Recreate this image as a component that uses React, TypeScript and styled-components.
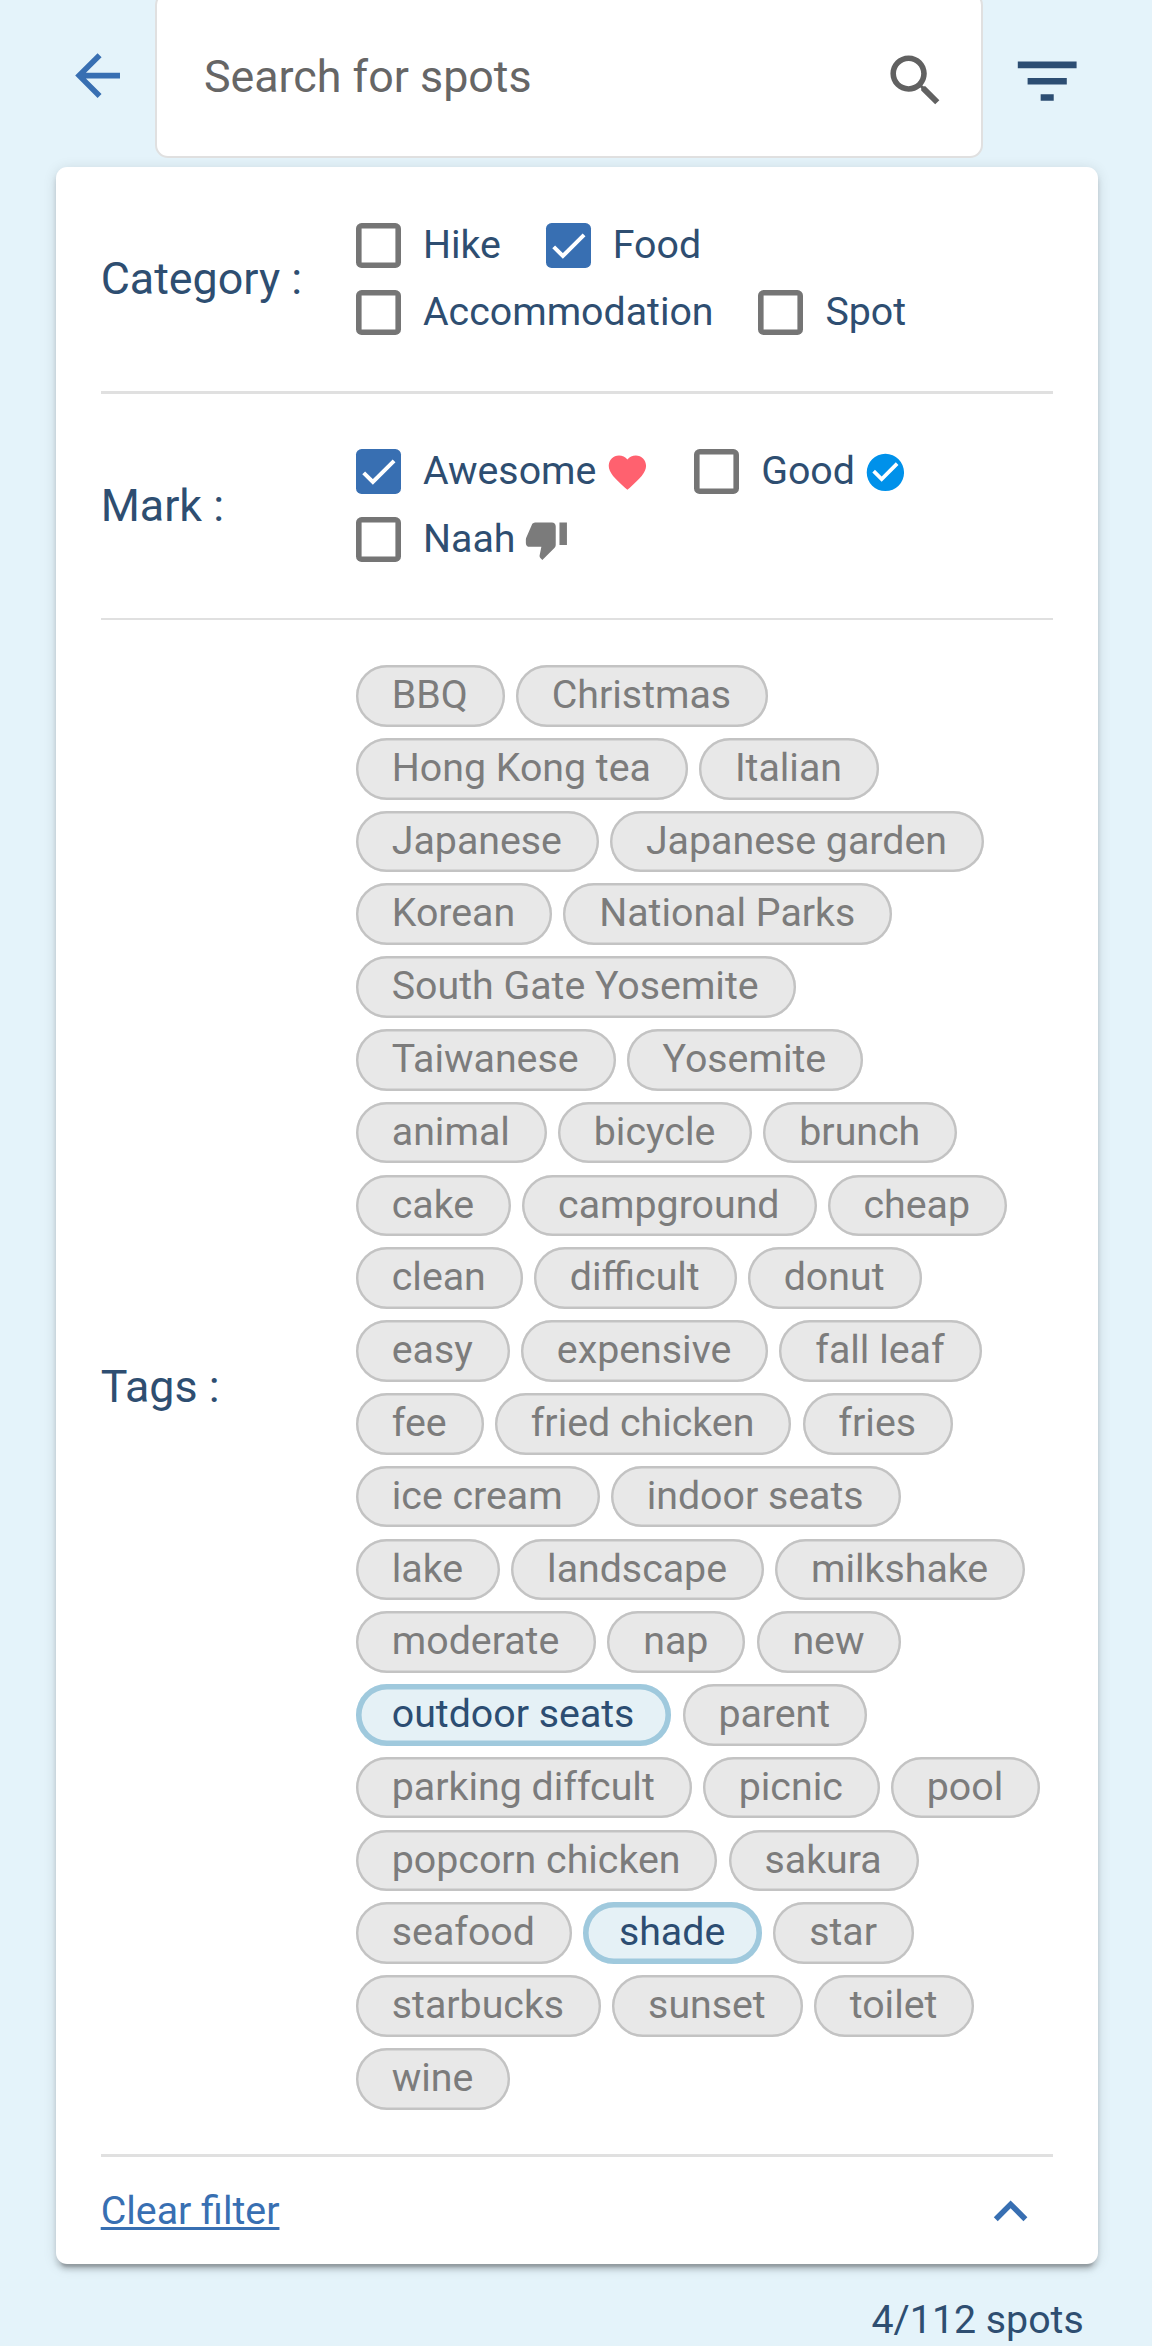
import React, { useState } from "react";
import styled, { createGlobalStyle, css } from "styled-components";

const GlobalStyle = createGlobalStyle`
  *, *::before, *::after { box-sizing: border-box; }
  html, body { margin: 0; padding: 0; background: #e4f3fa; }
  body {
    font-family: Roboto, "Liberation Sans", sans-serif;
    color: #2e4e71;
    overflow: hidden;
  }
  button { font: inherit; border: 0; background: none; padding: 0; margin: 0; cursor: pointer; }
`;

const Page = styled.div`
  display: flex;
  flex-direction: column;
  width: 1152px;
  height: 2346px;
  overflow: hidden;
  background: #e4f3fa;
`;

const TopBar = styled.header`
  flex: none;
  display: flex;
  align-items: flex-start;
  height: 166.8px;
  padding-left: 64.4px;
`;

const IconButton = styled.button<{ $size: number; $top: number; $color: string }>`
  flex: none;
  display: flex;
  width: ${(p) => p.$size}px;
  height: ${(p) => p.$size}px;
  margin-top: ${(p) => p.$top}px;
  color: ${(p) => p.$color};
`;

const Glyph = styled.svg`
  display: block;
  width: 100%;
  height: 100%;
  fill: currentColor;
`;

const SearchField = styled.div`
  flex: none;
  display: flex;
  align-items: center;
  width: 828px;
  height: 165.8px;
  margin: -7.8px 25.2px 0 23.3px;
  padding: 0 32px 0 47px;
  background: #fff;
  border: 2.8px solid #e0e0e0;
  border-radius: 13px;
`;

const SearchInput = styled.input`
  flex: 1;
  min-width: 0;
  height: 60px;
  padding: 0;
  margin-top: 3px;
  border: 0;
  outline: 0;
  background: transparent;
  font: 400 44.8px Roboto, sans-serif;
  color: #333;
  &::placeholder { color: #666; opacity: 1; }
`;

const Card = styled.main`
  flex: none;
  display: flex;
  flex-direction: column;
  width: 1042px;
  height: 2097.2px;
  margin-left: 55.9px;
  padding: 0 44.8px;
  background: #fff;
  border-radius: 11.2px;
  box-shadow:
    0 8.4px 2.8px -5.6px rgba(0, 0, 0, 0.2),
    0 5.6px 5.6px 0 rgba(0, 0, 0, 0.14),
    0 2.8px 14px 0 rgba(0, 0, 0, 0.12);
`;

const FilterRow = styled.section`
  flex: none;
  display: grid;
  grid-template-columns: 255.3px 1fr;
  align-items: center;
  padding: 44.8px 0;
`;

const Divider = styled.hr`
  flex: none;
  width: 100%;
  height: 2.8px;
  margin: 0;
  border: 0;
  background: #e0e0e0;
`;

const RowTitle = styled.h2`
  margin: 0;
  font-size: 44.8px;
  font-weight: 400;
  line-height: 60px;
`;

const CheckList = styled.div`
  display: flex;
  flex-wrap: wrap;
  column-gap: 44.8px;
`;

const CheckItem = styled.label`
  display: flex;
  align-items: center;
  height: 67.2px;
  font-size: 39.3px;
  line-height: 66px;
  white-space: nowrap;
  cursor: pointer;
`;

const Box = styled.span<{ $checked: boolean }>`
  flex: none;
  width: 45px;
  height: 45px;
  margin-right: 22px;
  border-radius: 5.6px;
  color: #fff;
  ${(p) =>
    p.$checked
      ? css`background: #386fb2;`
      : css`
          border: 0 solid transparent;
          box-shadow: inset 0 0 0 5.6px #757575;
        `}
`;

const CheckText = styled.span`
  display: block;
  height: 67.2px;
`;

const MarkIcon = styled.span<{ $color: string }>`
  flex: none;
  display: block;
  width: 44.8px;
  height: 44.8px;
  margin-left: 8.2px;
  color: ${(p) => p.$color};
`;

const TagList = styled.div`
  display: flex;
  flex-wrap: wrap;
  gap: 11.2px;
  max-width: 690px;
`;

const Chip = styled.button<{ $selected: boolean }>`
  height: 61.6px;
  padding: 0 37px 0 35.8px;
  border-radius: 30.8px;
  font-size: 39.3px;
  line-height: 61.6px;
  white-space: nowrap;
  ${(p) =>
    p.$selected
      ? css`
          color: #2c4d72;
          background: #e5f1f6;
          box-shadow: inset 0 0 0 5.6px #9fc9dd;
        `
      : css`
          color: #7c7c7c;
          background: #e8e8e8;
          box-shadow: inset 0 0 0 2.4px #c3c3c3;
        `}
`;

const CardFooter = styled.footer`
  flex: 1;
  display: flex;
  align-items: center;
  justify-content: space-between;
  padding-right: 9px;
`;

const ClearLink = styled.a`
  font-size: 39.3px;
  line-height: 60px;
  color: #386fb2;
  text-decoration: underline;
  text-decoration-thickness: 3px;
  text-decoration-skip-ink: none;
  text-underline-offset: 3px;
`;

const ResultCount = styled.p`
  margin: 26px 68.3px 0 0;
  text-align: right;
  font-size: 39.3px;
  line-height: 60px;
`;

const paths = {
  back: "M20 11H7.83l5.59-5.59L12 4l-8 8 8 8 1.41-1.41L7.83 13H20v-2z",
  search:
    "M15.5 14h-.79l-.28-.27C15.41 12.59 16 11.11 16 9.5 16 5.91 13.09 3 9.5 3S3 5.91 3 9.5 5.91 16 9.5 16c1.61 0 3.09-.59 4.23-1.57l.27.28v.79l5 4.99L20.49 19l-4.99-5zm-6 0C7.01 14 5 11.99 5 9.5S7.01 5 9.5 5 14 7.01 14 9.5 11.99 14 9.5 14z",
  filter: "M10 18h4v-2h-4v2zM3 6v2h18V6H3zm3 7h12v-2H6v2z",
  collapse: "M12 8l-6 6 1.41 1.41L12 10.83l4.59 4.58L18 14z",
  heart:
    "M12 21.35l-1.45-1.32C5.4 15.36 2 12.28 2 8.5 2 5.42 4.42 3 7.5 3c1.74 0 3.41.81 4.5 2.09C13.09 3.81 14.76 3 16.5 3 19.58 3 22 5.42 22 8.5c0 3.78-3.4 6.86-8.55 11.54L12 21.35z",
  good:
    "M12 2C6.48 2 2 6.48 2 12s4.48 10 10 10 10-4.48 10-10S17.52 2 12 2zm-2 15l-5-5 1.41-1.41L10 14.17l7.59-7.59L19 8l-9 9z",
  thumbDown:
    "M15 3H6c-.83 0-1.54.5-1.84 1.22l-3.02 7.05c-.09.23-.14.47-.14.73v2c0 1.1.9 2 2 2h6.31l-.95 4.57-.03.32c0 .41.17.79.44 1.06L9.83 23l6.59-6.59c.36-.36.58-.86.58-1.41V5c0-1.1-.9-2-2-2zm4 0v12h4V3h-4z",
};

type IconName = keyof typeof paths;

const Icon = ({ name }: { name: IconName }) => (
  <Glyph viewBox="0 0 24 24" aria-hidden="true">
    <path d={paths[name]} />
  </Glyph>
);

interface Option {
  label: string;
  icon?: IconName;
  color?: string;
}

const categories: Option[] = [
  { label: "Hike" },
  { label: "Food" },
  { label: "Accommodation" },
  { label: "Spot" },
];

const marks: Option[] = [
  { label: "Awesome", icon: "heart", color: "#ff616f" },
  { label: "Good", icon: "good", color: "#0091ea" },
  { label: "Naah", icon: "thumbDown", color: "#7b7b7b" },
];

const tags = [
  "BBQ", "Christmas", "Hong Kong tea", "Italian", "Japanese", "Japanese garden",
  "Korean", "National Parks", "South Gate Yosemite", "Taiwanese", "Yosemite",
  "animal", "bicycle", "brunch", "cake", "campground", "cheap", "clean",
  "difficult", "donut", "easy", "expensive", "fall leaf", "fee",
  "fried chicken", "fries", "ice cream", "indoor seats", "lake", "landscape",
  "milkshake", "moderate", "nap", "new", "outdoor seats", "parent",
  "parking diffcult", "picnic", "pool", "popcorn chicken", "sakura", "seafood",
  "shade", "star", "starbucks", "sunset", "toilet", "wine",
];

const toggle = (list: string[], value: string) =>
  list.includes(value) ? list.filter((v) => v !== value) : [...list, value];

interface CheckGroupProps {
  title: string;
  options: Option[];
  selected: string[];
  onToggle: (label: string) => void;
}

const CheckGroup = ({ title, options, selected, onToggle }: CheckGroupProps) => (
  <FilterRow>
    <RowTitle>{title} :</RowTitle>
    <CheckList>
      {options.map(({ label, icon, color }) => {
        const checked = selected.includes(label);
        return (
          <CheckItem key={label} onClick={() => onToggle(label)}>
            <Box $checked={checked} role="checkbox" aria-checked={checked}>
              {checked && (
                <Glyph viewBox="0 0 24 24">
                  <path d="M4.1 12.7 9 17.6 20.3 6.3" fill="none" stroke="currentColor" strokeWidth="2.13" />
                </Glyph>
              )}
            </Box>
            <CheckText>{label}</CheckText>
            {icon && (
              <MarkIcon $color={color ?? "#757575"}>
                <Icon name={icon} />
              </MarkIcon>
            )}
          </CheckItem>
        );
      })}
    </CheckList>
  </FilterRow>
);

export default function App() {
  const [category, setCategory] = useState(["Food"]);
  const [mark, setMark] = useState(["Awesome"]);
  const [picked, setPicked] = useState(["outdoor seats", "shade"]);

  const clear = () => {
    setCategory([]);
    setMark([]);
    setPicked([]);
  };

  return (
    <>
      <GlobalStyle />
      <Page>
        <TopBar>
          <IconButton $size={67.2} $top={41.5} $color="#386fb2" aria-label="Back">
            <Icon name="back" />
          </IconButton>
          <SearchField>
            <SearchInput placeholder="Search for spots" />
            <IconButton $size={67.2} $top={10.5} $color="#616161" aria-label="Search">
              <Icon name="search" />
            </IconButton>
          </SearchField>
          <IconButton $size={78.4} $top={41.6} $color="#2c4d72" aria-label="Filter">
            <Icon name="filter" />
          </IconButton>
        </TopBar>

        <Card>
          <CheckGroup
            title="Category"
            options={categories}
            selected={category}
            onToggle={(v) => setCategory(toggle(category, v))}
          />
          <Divider />
          <CheckGroup
            title="Mark"
            options={marks}
            selected={mark}
            onToggle={(v) => setMark(toggle(mark, v))}
          />
          <Divider />
          <FilterRow>
            <RowTitle>Tags :</RowTitle>
            <TagList>
              {tags.map((tag) => (
                <Chip
                  key={tag}
                  $selected={picked.includes(tag)}
                  onClick={() => setPicked(toggle(picked, tag))}
                >
                  {tag}
                </Chip>
              ))}
            </TagList>
          </FilterRow>
          <Divider />
          <CardFooter>
            <ClearLink onClick={clear}>Clear filter</ClearLink>
            <IconButton $size={67.2} $top={1.5} $color="#386fb2" aria-label="Collapse">
              <Icon name="collapse" />
            </IconButton>
          </CardFooter>
        </Card>

        <ResultCount>4/112 spots</ResultCount>
      </Page>
    </>
  );
}
